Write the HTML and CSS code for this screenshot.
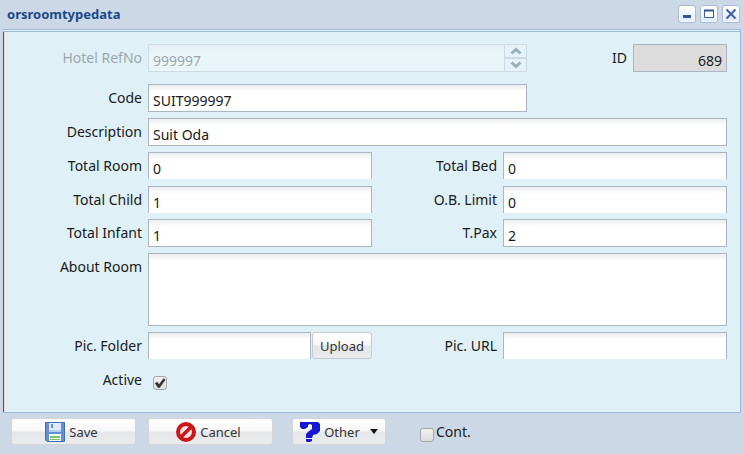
FILE: index.html
```html
<!DOCTYPE html>
<html lang="en">
<head>
<meta charset="utf-8">
<title>orsroomtypedata</title>
<link rel="stylesheet" href="styles.css">
</head>
<body>
<main class="window">
  <header class="titlebar">
    <h1 class="title">orsroomtypedata</h1>
    <div class="tools">
      <button class="tool" type="button" aria-label="Minimize"><svg viewBox="0 0 16 16"><path d="M4 10.500h8" stroke="#33529a" stroke-width="3"/></svg></button>
      <button class="tool" type="button" aria-label="Maximize"><svg viewBox="0 0 16 16"><path d="M3.500 4.500h9v7h-9z" fill="#fff" stroke="#42609f"/><path d="M3 4.500h10" stroke="#33529a" stroke-width="2"/></svg></button>
      <button class="tool" type="button" aria-label="Close"><svg viewBox="0 0 16 16"><path d="M3.500 3.500l9 9M12.500 3.500l-9 9" stroke="#42609f" stroke-width="2"/></svg></button>
    </div>
  </header>
  <form class="form" id="room">
    <div class="row row-head disabled-start">
      <label class="faded" for="ref">Hotel RefNo</label>
      <div class="spinner faded">
        <input class="field" id="ref" value="999997" disabled>
        <div class="arrows">
          <button type="button" disabled aria-label="Increase"><svg viewBox="0 0 12 8"><path d="M1.500 6.500L6 2.500l4.500 4" /></svg></button>
          <button type="button" disabled aria-label="Decrease"><svg viewBox="0 0 12 8"><path d="M1.500 1.500L6 5.500l4.500-4" /></svg></button>
        </div>
      </div>
      <label for="id">ID</label>
      <input class="field readonly" id="id" value="689" readonly>
    </div>
    <div class="row row-head">
      <label for="code">Code</label>
      <input class="field" id="code" value="SUIT999997">
    </div>
    <div class="row row-wide">
      <label for="desc">Description</label>
      <input class="field" id="desc" value="Suit Oda">
    </div>
    <div class="row row-pair">
      <label for="room-total">Total Room</label>
      <input class="field open" id="room-total" value="0">
      <label for="bed">Total Bed</label>
      <input class="field open" id="bed" value="0">
    </div>
    <div class="row row-pair row-short">
      <label for="child">Total Child</label>
      <input class="field open" id="child" value="1">
      <label for="limit">O.B. Limit</label>
      <input class="field open" id="limit" value="0">
    </div>
    <div class="row row-pair">
      <label for="infant">Total Infant</label>
      <input class="field" id="infant" value="1">
      <label for="pax">T.Pax</label>
      <input class="field" id="pax" value="2">
    </div>
    <div class="row row-wide">
      <label for="about">About Room</label>
      <textarea class="field area" id="about"></textarea>
    </div>
    <div class="row row-pair">
      <label for="folder">Pic. Folder</label>
      <div class="upload">
        <input class="field open" id="folder">
        <button class="btn btn-upload" type="button">Upload</button>
      </div>
      <label for="url">Pic. URL</label>
      <input class="field open" id="url">
    </div>
    <div class="row row-wide">
      <label for="active">Active</label>
      <input class="check check-active" id="active" type="checkbox" checked>
    </div>
  </form>
  <footer class="footer">
    <button class="btn btn-main" type="submit" form="room">
      <svg class="icon" viewBox="0 0 20 20"><path d="M.5.5h19v19H2L.5 18z" fill="#6590d5" stroke="#3e6cb5"/><path d="M4 1h12v9H4z" fill="#dfeafa"/><path d="M6 2h2v4H6z" fill="#6590d5"/><path d="M4 8h12v2H4z" fill="#b8cdec"/><path d="M4 12h12v7H4z" fill="#f4f9f1"/><path d="M5 14h10v2H5zM5 17h10v1H5z" fill="#79c467"/></svg>
      Save
    </button>
    <button class="btn btn-main" type="button">
      <svg class="icon" viewBox="0 0 20 20"><circle cx="10" cy="10" r="8" fill="#f4e6e6" stroke="#cb1719" stroke-width="4"/><path d="M4.500 15.500l11-11" stroke="#cb1719" stroke-width="3.500"/></svg>
      Cancel
    </button>
    <button class="btn btn-other" type="button">
      <svg class="icon" viewBox="0 0 20 20"><path d="M0 0h18l2 2v7l-3 3-4 1-1 3H6v-4l3-3 3-2V3l-2-1-2 1v2L5 7H2L0 5zM6 17h6v2l-2 1H7l-1-1z" fill="#1717d2"/></svg>
      Other
      <svg class="caret" viewBox="0 0 8 5"><path d="M0 0h8L4 5z"/></svg>
    </button>
    <label class="cont"><input class="check" type="checkbox">Cont.</label>
  </footer>
</main>
</body>
</html>
```
FILE: styles.css
```css
* {
  box-sizing: border-box;
}

body {
  margin: 0;
  background: #ccd8e6;
  color: #1a1a1a;
  font: 14px/20px "Noto Sans", "Open Sans", sans-serif;
}

button,
input,
textarea {
  margin: 0;
  font: inherit;
  color: inherit;
}

.window {
  display: flex;
  flex-direction: column;
  min-height: 100vh;
  padding: 0 3px;
}

.titlebar {
  display: flex;
  align-items: center;
  justify-content: space-between;
  height: 29px;
  padding: 0 1px 2px 4px;
}

.title {
  margin: 0;
  font-size: 13px;
  font-weight: 700;
  color: #174a86;
}

.tools {
  display: flex;
  gap: 4px;
}

.tool {
  width: 18px;
  height: 18px;
  padding: 0;
  border: 1px solid #a4bad8;
  border-radius: 3px;
  background: linear-gradient(#fff, #dceafc);
  box-shadow: inset 0 0 0 1px #fff;
}

.tool svg {
  display: block;
  width: 16px;
  height: 16px;
}

.form {
  display: flex;
  flex-direction: column;
  flex: 1;
  gap: 6px;
  padding: 12px 13px 0 1px;
  border: 1px solid #9db9dc;
  border-top: 3px double #9db9dc;
  border-left: 0;
  background: #dff0f7;
  box-shadow: inset 1px 0 #c4202c, inset 2px 0 #efd5dc;
}

.row {
  display: grid;
  gap: 6px;
  min-height: 28px;
  align-items: start;
}

.row-short {
  min-height: 27px;
}

.row-head {
  grid-template-columns: 138px 1fr 94px 94px;
}

.disabled-start {
  margin-bottom: 6px;
}

.row-wide {
  grid-template-columns: 138px 1fr;
}

.row-pair {
  grid-template-columns: 138px 1fr 119px 1fr;
}

.row label {
  padding-top: 4px;
  text-align: right;
}

.faded {
  opacity: 0.35;
}

.field {
  width: 100%;
  min-width: 0;
  height: 28px;
  padding: 5px 4px 0;
  border: 1px solid #a9b5c1;
  border-radius: 0;
  outline: 0;
  background: linear-gradient(#eceeef, #fff 7px);
}

.field.open {
  height: 27px;
  padding-top: 4px;
  border-bottom: 0;
}

.field.readonly {
  background: #dcdcdc;
  text-align: right;
}

.field.area {
  display: block;
  height: 73px;
  resize: none;
}

.spinner {
  display: flex;
}

.arrows {
  display: flex;
  flex: none;
  flex-direction: column;
  width: 22px;
}

.arrows button {
  display: grid;
  place-items: center;
  height: 14px;
  padding: 0;
  border: 1px solid #a9b5c1;
  border-left: 0;
  background: #f2f6f9;
}

.arrows svg {
  width: 12px;
  height: 8px;
  fill: none;
  stroke: #173a50;
  stroke-width: 3;
}

.upload {
  display: flex;
  gap: 1px;
}

.btn {
  display: flex;
  align-items: center;
  justify-content: center;
  gap: 4px;
  height: 27px;
  padding: 0;
  border: 1px solid #d3d6da;
  border-radius: 3px;
  background: linear-gradient(#fff, #f7f7f7 48%, #e5e6e8 52%, #eaebed);
  color: #333;
  font-size: 13px;
}

.btn-upload {
  flex: none;
  width: 60px;
  border-color: #c4cbd2;
}

.btn-main {
  width: 125px;
  padding-right: 4px;
}

.btn-other {
  width: 94px;
  margin-left: 7px;
}

.icon {
  width: 20px;
  height: 20px;
}

.caret {
  width: 8px;
  height: 5px;
  margin-left: 6px;
  fill: #111;
}

.check {
  width: 14px;
  height: 14px;
  appearance: none;
  border: 1px solid #a3a6a9;
  border-radius: 3px;
  background: linear-gradient(#f1f1f1, #dddedf);
}

.check:checked::before {
  content: "";
  display: block;
  width: 12px;
  height: 12px;
  background: #333;
  clip-path: polygon(8% 52%, 26% 40%, 42% 60%, 80% 10%, 96% 22%, 48% 90%, 32% 90%);
}

.check-active {
  margin: 10px 0 0 5px;
}

.footer {
  display: flex;
  gap: 12px;
  height: 41px;
  padding: 5px 8px 0;
}

.cont {
  display: flex;
  align-items: flex-start;
  gap: 2px;
  margin-left: 22px;
  padding-top: 4px;
}

.cont .check {
  margin-top: 6px;
}
```
